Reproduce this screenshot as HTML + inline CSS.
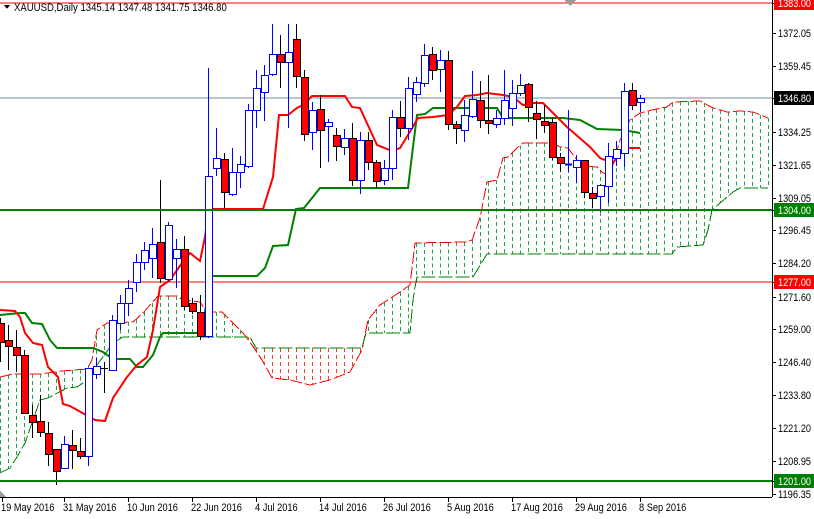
<!DOCTYPE html>
<html><head><meta charset="utf-8"><style>
html,body{margin:0;padding:0;background:#fff;}
body{width:814px;height:514px;overflow:hidden;font-family:"Liberation Sans",sans-serif;}
svg text{font-family:"Liberation Sans",sans-serif;font-size:11px;}
</style></head><body>
<svg id="c" width="814" height="514" xmlns="http://www.w3.org/2000/svg" shape-rendering="crispEdges">
<rect width="814" height="514" fill="#fff"/>
<g id="cloud"></g>
<line x1="0" y1="3" x2="772" y2="3" stroke="#f00" stroke-width="1"/>
<line x1="0" y1="98" x2="772" y2="98" stroke="#778899" stroke-width="1"/>
<line x1="0" y1="282" x2="772" y2="282" stroke="#f00" stroke-width="1"/>
<g id="lines"></g>
<g id="candles"></g>
<line x1="0" y1="210" x2="772" y2="210" stroke="#008000" stroke-width="2"/>
<line x1="0" y1="481" x2="772" y2="481" stroke="#008000" stroke-width="2"/>
<line x1="772.5" y1="0" x2="772.5" y2="497" stroke="#000"/>
<line x1="0" y1="497.5" x2="772" y2="497.5" stroke="#000"/>
<g id="axis"></g>
<polygon points="4,5 10,5 7,9" fill="#000"/>
<text id="ttl" x="14" y="11" fill="#000" font-size="11">XAUUSD,Daily  1345.14 1347.48 1341.75 1346.80</text>
<polygon points="564,0 576,0 570,6" fill="#999"/>
<polygon points="0,497 6,497 0,491" fill="#999"/>
</svg>
<script>
var NS="http://www.w3.org/2000/svg";
function el(p,t,a,txt){var e=document.createElementNS(NS,t);for(var k in a)e.setAttribute(k,a[k]);if(txt!==undefined)e.textContent=txt;document.getElementById(p).appendChild(e);return e;}
function shrink(e,r){var w=e.getComputedTextLength();e.setAttribute('textLength',(w*r).toFixed(1));e.setAttribute('lengthAdjust','spacingAndGlyphs');}
function pl(p,pts,col,w,extra){var a={points:pts.map(function(q){return q.join(',')}).join(' '),fill:'none',stroke:col,'stroke-width':w};for(var k in extra)a[k]=extra[k];el(p,'polyline',a);}
function interp(pts,x){if(x<=pts[0][0])return pts[0][1];for(var i=1;i<pts.length;i++){if(x<=pts[i][0]){var a=pts[i-1],b=pts[i];return a[1]+(b[1]-a[1])*(x-a[0])/(b[0]-a[0]);}}return pts[pts.length-1][1];}
var A=[[0,377],[13,374],[40,374],[62,371],[87,369],[92,360],[97,330],[107,323],[133,322],[143,313],[158,296],[177,296],[183,300],[200,302],[207,312],[222,312],[230,320],[243,333],[252,345],[262,360],[272,378],[290,380],[310,385],[330,380],[350,372],[362,350],[368,320],[380,305],[400,292],[410,285],[413,260],[415,243],[467,242],[472,240],[480,218],[487,182],[497,180],[503,158],[508,157],[517,148],[523,143],[553,143],[560,147],[568,148],[577,160],[583,166],[597,167],[603,173],[610,175],[620,140],[630,120],[640,113],[652,110],[667,107],[673,102],[700,101],[713,108],[727,112],[740,111],[753,112],[768,118]];
var B=[[0,473],[10,468],[17,457],[25,443],[40,400],[48,398],[67,388],[77,387],[88,380],[97,365],[113,343],[123,337],[250,337],[256,348],[362,348],[366,333],[410,333],[413,300],[415,287],[417,277],[473,277],[487,254],[672,254],[677,247],[703,245],[708,230],[712,210],[733,192],[740,188],[768,188]];
for(var x=0;x<=768;x+=8){var a=interp(A,x),b=interp(B,x);var col=a<b?'#1aa84a':'#f04020';el('cloud','line',{x1:x+0.5,y1:Math.min(a,b),x2:x+0.5,y2:Math.max(a,b),stroke:col,'stroke-width':1,'stroke-dasharray':'4,3'});}
pl('cloud',A,'#f00',1,{'stroke-dasharray':'12,3'});
pl('cloud',B,'#008000',1,{'stroke-dasharray':'14,3'});
var T=[[0,310],[15,311],[20,317],[25,333],[33,343],[42,345],[48,367],[58,377],[63,404],[70,406],[95,420],[105,421],[113,398],[127,377],[137,365],[147,357],[153,330],[160,287],[170,280],[182,263],[190,253],[200,261],[205,237],[209,209],[263,209],[273,177],[279,115],[288,115],[297,108],[303,105],[312,96],[345,96],[352,107],[360,108],[377,145],[392,151],[400,148],[408,135],[418,118],[433,117],[448,115],[457,107],[465,96],[477,95],[487,93],[503,95],[513,97],[523,105],[533,103],[543,103],[553,113],[567,127],[590,147],[600,158],[613,163],[622,150],[627,148],[640,148]];
var K=[[0,315],[20,313],[25,313],[32,323],[42,324],[50,340],[57,348],[93,348],[103,352],[113,359],[130,359],[137,367],[143,367],[153,355],[160,337],[163,333],[200,333],[203,323],[207,300],[209,276],[257,276],[265,268],[273,246],[288,245],[296,209],[304,208],[320,188],[408,188],[413,147],[417,115],[425,114],[433,108],[497,108],[503,118],[563,118],[580,120],[597,129],[623,130],[640,133]];
pl('lines',K,'#008000',2,{'shape-rendering':'auto'});
pl('lines',T,'#f00',2,{'shape-rendering':'auto'});
var C=[[0,323,342,318,362,0],[8,340,346,325,370,0],[16,347,355,330,372,0],[24,355,413,350,413,0],[32,415,422,405,438,0],[40,421,432,395,437,0],[48,433,454,422,466,0],[56,449,471,449,485,0],[64,444,468,436,468,1],[72,445,450,430,469,0],[80,451,456,438,459,0],[88,368,456,368,466,1],[96,366,374,358,379,1],[104,368,369,362,393,2],[112,320,370,315,371,1],[120,303,323,295,330,1],[128,288,303,280,316,1],[136,262,282,254,292,1],[144,250,262,242,270,1],[152,244,258,228,278,1],[160,242,278,180,283,0],[168,225,279,222,282,1],[176,249,258,239,288,1],[184,249,306,236,310,0],[192,303,311,298,314,0],[200,312,336,295,340,0],[208,176,336,68,338,1],[216,158,168,128,176,1],[224,159,192,153,208,0],[232,172,194,148,196,1],[240,164,172,156,188,1],[248,110,166,104,168,1],[256,88,110,70,128,1],[264,75,92,65,121,1],[272,54,74,24,76,1],[280,54,62,35,88,0],[288,52,62,24,128,1],[296,39,76,24,88,0],[304,77,134,70,141,0],[312,110,132,102,150,1],[320,109,130,95,168,0],[328,122,126,119,162,1],[336,135,146,128,161,0],[344,138,147,129,155,1],[352,138,180,123,186,0],[360,140,180,132,194,1],[368,140,162,132,170,0],[376,162,181,160,188,0],[384,168,180,160,185,1],[392,117,168,110,180,1],[400,117,128,101,137,0],[408,88,128,77,140,1],[416,82,94,77,102,1],[424,55,83,44,87,1],[432,54,70,47,80,0],[440,60,69,50,92,1],[448,60,124,51,130,0],[456,124,128,121,144,0],[464,115,130,100,142,1],[472,99,116,71,118,1],[480,100,120,81,128,0],[488,120,123,75,134,0],[496,118,124,110,128,1],[504,100,118,70,125,1],[512,93,108,80,126,1],[520,85,93,74,96,1],[528,84,107,83,122,0],[536,113,119,101,139,0],[544,121,125,105,133,0],[552,122,157,118,160,0],[560,157,163,153,172,0],[568,164,165,110,172,3],[576,160,167,155,183,1],[584,160,192,160,198,0],[592,193,198,187,208,0],[600,185,196,184,212,1],[608,156,186,143,203,1],[616,149,158,141,166,1],[624,91,153,83,167,1],[632,90,105,83,110,0],[640,98,102,95,112,1]];
C.forEach(function(c){var x=c[0],t=c[1],b=c[2],h=c[3],l=c[4],k=c[5];
 if(k==2){el('candles','line',{x1:x+0.5,y1:h,x2:x+0.5,y2:l,stroke:'#000'});el('candles','line',{x1:x-3,y1:t+0.5,x2:x+4,y2:t+0.5,stroke:'#000'});return;}
 if(k==3){el('candles','line',{x1:x+0.5,y1:h,x2:x+0.5,y2:l,stroke:'#00f'});el('candles','line',{x1:x-3,y1:t+0.5,x2:x+4,y2:t+0.5,stroke:'#00f','stroke-width':2});return;}
 var col=k?'#00f':'#000';
 el('candles','line',{x1:x+0.5,y1:h,x2:x+0.5,y2:l,stroke:col});
 el('candles','rect',{x:x-3+0.5,y:t+0.5,width:7,height:Math.max(1,b-t),fill:k?'#fff':'#f00',stroke:col});
});
var L=[[3,'1383.00','#f00','#fff'],[33,'1372.05'],[66,'1359.45'],[98,'1346.80','#000','#fff'],[132,'1334.25'],[165,'1321.65'],[198,'1309.05'],[210,'1304.00','#008000','#fff'],[230,'1296.45'],[263,'1284.20'],[282,'1277.00','#f00','#fff'],[297,'1271.60'],[329,'1259.00'],[362,'1246.40'],[395,'1233.80'],[428,'1221.20'],[461,'1208.95'],[481,'1201.00','#008000','#fff'],[494,'1196.35']];
L.forEach(function(l){var y=l[0];el('axis','line',{x1:772,y1:y+0.5,x2:776,y2:y+0.5,stroke:'#000'});
 if(l[2]){el('axis','rect',{x:774,y:y-7,width:40,height:14,fill:l[2]});}
 el('axis','text',{x:778,y:y+4,fill:l[3]||'#000',textLength:33,lengthAdjust:'spacingAndGlyphs'},l[1]);});
var D=[[2,'19 May 2016'],[64,'31 May 2016'],[128,'10 Jun 2016'],[192,'22 Jun 2016'],[256,'4 Jul 2016'],[320,'14 Jul 2016'],[384,'26 Jul 2016'],[448,'5 Aug 2016'],[512,'17 Aug 2016'],[576,'29 Aug 2016'],[640,'8 Sep 2016']];
D.forEach(function(d){el('axis','line',{x1:d[0]+0.5,y1:497,x2:d[0]+0.5,y2:502,stroke:'#000'});var e=el('axis','text',{x:d[0]-1,y:511,fill:'#000'},d[1]);shrink(e,0.84);});
shrink(document.getElementById('ttl'),0.87);
</script>
</body></html>
